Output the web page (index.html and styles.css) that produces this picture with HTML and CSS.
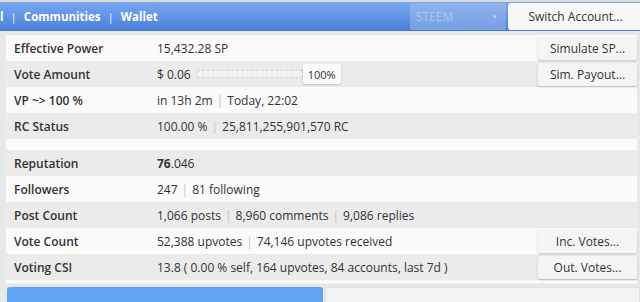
FILE: index.html
```
<!DOCTYPE html>
<html>
<head>
<meta charset="utf-8">
<link rel="stylesheet" href="styles.css">
</head>
<body>
<header class="topbar">
  <nav class="nav">
    <span class="nav-item">l</span>
    <span class="nav-sep">|</span>
    <span class="nav-item">Communities</span>
    <span class="nav-sep">|</span>
    <span class="nav-item">Wallet</span>
  </nav>
  <div class="select"><span>STEEM</span><span class="caret">▾</span></div>
  <button class="switch">Switch Account...</button>
</header>

<section class="panel">
  <div class="row light">
    <div class="label">Effective Power</div>
    <div class="value">15,432.28 SP</div>
    <button class="btn">Simulate SP...</button>
  </div>
  <div class="row dark">
    <div class="label">Vote Amount</div>
    <div class="value">$ 0.06 <span class="bar"></span><span class="pct">100%</span></div>
    <button class="btn">Sim. Payout...</button>
  </div>
  <div class="row light">
    <div class="label">VP ~&gt; 100 %</div>
    <div class="value">in 13h 2m<span class="sep">|</span>Today, 22:02</div>
  </div>
  <div class="row dark">
    <div class="label">RC Status</div>
    <div class="value">100.00 %<span class="sep">|</span>25,811,255,901,570 RC</div>
  </div>
  <div class="spacer"></div>
  <div class="row dark">
    <div class="label">Reputation</div>
    <div class="value"><b>76</b>.046</div>
  </div>
  <div class="row light">
    <div class="label">Followers</div>
    <div class="value">247<span class="sep">|</span>81 following</div>
  </div>
  <div class="row dark">
    <div class="label">Post Count</div>
    <div class="value">1,066 posts<span class="sep">|</span>8,960 comments<span class="sep">|</span>9,086 replies</div>
  </div>
  <div class="row light">
    <div class="label">Vote Count</div>
    <div class="value">52,388 upvotes<span class="sep">|</span>74,146 upvotes received</div>
    <button class="btn">Inc. Votes...</button>
  </div>
  <div class="row dark">
    <div class="label">Voting CSI</div>
    <div class="value">13.8 ( 0.00 % self, 164 upvotes, 84 accounts, last 7d )</div>
    <button class="btn">Out. Votes...</button>
  </div>
</section>

<div class="bottom">
  <div class="tab-active"></div>
  <div class="tab-rest"></div>
</div>
</body>
</html>
```

FILE: styles.css
```
* { box-sizing: border-box; }
html, body { margin: 0; padding: 0; }
body {
  width: 640px;
  height: 302px;
  overflow: hidden;
  background: #e8e8e8;
  font-family: "Open Sans", "Liberation Sans", sans-serif;
  font-size: 12px;
  color: #333;
}
.topbar {
  display: flex;
  align-items: center;
  height: 31px;
  border-top: 2px solid #dcdcdc;
  background: linear-gradient(#78a8f2, #4a7fd8);
  overflow: hidden;
}
.nav {
  display: flex;
  align-items: center;
  gap: 7px;
  color: #fff;
  font-weight: 700;
  font-size: 11.5px;
  flex: 1;
  margin-top: -1px;
}
.nav-sep { font-weight: 400; color: #e8f0ff; }
.select {
  width: 96px;
  height: 27px;
  background: rgba(170, 195, 240, 0.45);
  border-radius: 2px;
  display: flex;
  align-items: center;
  justify-content: space-between;
  padding: 0 9px 0 6px;
  color: #b3c4de;
  font-size: 12px;
}
.caret { font-size: 7px; color: #c9d5ea; }
.switch {
  width: 135px;
  height: 27px;
  margin-left: 2px;
  margin-right: -3px;
  border: none;
  border-radius: 3px;
  background: #f7f7f7;
  font-family: inherit;
  font-size: 12px;
  color: #333;
  padding: 0;
}
.panel {
  margin: 4px 3px 0 6px;
  background: #fafafa;
  padding-bottom: 2px;
  box-shadow: 0 1px 1px #fff;
}
.row {
  display: flex;
  align-items: center;
  height: 26px;
  padding-left: 8px;
}
.row.light { background: #fafafa; }
.row.dark { background: #ebebeb; }
.spacer { height: 11px; }
.label {
  width: 143px;
  font-weight: 600;
  color: #333;
}
.value {
  flex: 1;
  display: flex;
  align-items: center;
  white-space: nowrap;
}
.value b { font-weight: 700; }
.sep {
  color: #cfc2b6;
  margin: 0 4px;
}
.bar {
  width: 106px;
  height: 8px;
  margin-left: 6px;
  border: 1px dashed #d6d6d6;
  background: #f3f3f3;
}
.pct {
  height: 20px;
  padding: 0 5px;
  display: flex;
  align-items: center;
  background: #fbfbfb;
  border-radius: 2px;
  box-shadow: 0 1px 2px rgba(0,0,0,0.18);
  font-size: 11px;
}
.btn {
  width: 99px;
  height: 23px;
  border: none;
  border-radius: 2px;
  background: #f5f5f5;
  box-shadow: 0 1px 2px rgba(0,0,0,0.22);
  font-family: inherit;
  font-size: 12px;
  color: #333;
  padding: 0;
}
.bottom {
  display: flex;
  gap: 2px;
  margin-top: 5px;
  padding-left: 7px;
}
.tab-active {
  width: 316px;
  height: 20px;
  background: #5ea4f0;
  border-radius: 3px 3px 0 0;
}
.tab-rest {
  flex: 1;
  height: 20px;
  background: #f2f2f2;
  border: 1px solid #e2e2e2;
}
```
